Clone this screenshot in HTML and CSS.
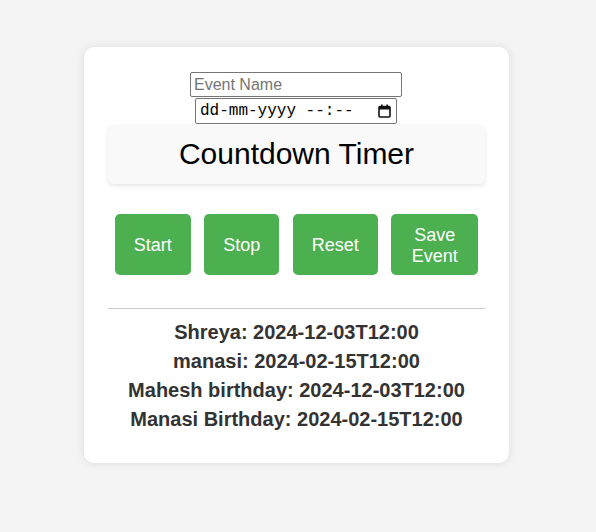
FILE: index.html
```html
<!DOCTYPE html>
<html>
<head>
<meta charset="utf-8">
<link rel="stylesheet" href="styles.css">
</head>
<body>
<div class="card">
  <div class="fields">
    <input class="name-input" type="text" placeholder="Event Name">
    <label class="date-input">
      <span class="date-text">dd-mm-yyyy --:--</span>
      <svg class="cal-icon" width="13" height="14" viewBox="0 0 13 14">
        <rect x="1" y="2.5" width="11" height="10.5" rx="1" fill="none" stroke="#111" stroke-width="1.6"/>
        <rect x="1" y="2.5" width="11" height="3" fill="#111"/>
        <rect x="3" y="0.5" width="1.6" height="3" fill="#111"/>
        <rect x="8.4" y="0.5" width="1.6" height="3" fill="#111"/>
      </svg>
    </label>
  </div>
  <div class="timer">Countdown Timer</div>
  <div class="buttons">
    <button class="btn">Start</button>
    <button class="btn">Stop</button>
    <button class="btn">Reset</button>
    <button class="btn">Save Event</button>
  </div>
  <hr class="divider">
  <ul class="events">
    <li>Shreya: 2024-12-03T12:00</li>
    <li>manasi: 2024-02-15T12:00</li>
    <li>Mahesh birthday: 2024-12-03T12:00</li>
    <li>Manasi Birthday: 2024-02-15T12:00</li>
  </ul>
</div>
</body>
</html>
```
FILE: styles.css
```css
html, body {
  margin: 0;
  padding: 0;
}
body {
  background: #f4f4f4;
  font-family: "Liberation Sans", Arial, sans-serif;
  padding-top: 47px;
  height: 532px;
  box-sizing: border-box;
}
.card {
  width: 377px;
  margin-left: 84px;
  background: #fff;
  border-radius: 10px;
  box-shadow: 0 0 10px rgba(0, 0, 0, 0.1);
  padding: 25px 24px 29px;
}
.fields {
  display: flex;
  flex-direction: column;
  align-items: center;
  gap: 1px;
}
.name-input {
  font-family: "Liberation Sans", Arial, sans-serif;
  font-size: 16px;
  width: 212px;
  height: 25px;
  box-sizing: border-box;
  border: 1px solid #767676;
  border-radius: 2px;
  padding: 1px 3px;
  color: #000;
  margin: 0 1px 0 0;
}
.name-input::placeholder {
  color: #757575;
}
.date-input {
  display: flex;
  align-items: center;
  justify-content: space-between;
  width: 202px;
  height: 26px;
  box-sizing: border-box;
  border: 1px solid #767676;
  border-radius: 2px;
  padding: 0 5px 0 4px;
  background: #fff;
  margin-right: 1px;
}
.date-text {
  font-family: "Liberation Mono", "Courier New", monospace;
  font-size: 16px;
  color: #000;
  white-space: pre;
  line-height: 18px;
}
.cal-icon {
  display: block;
}
.timer {
  margin-top: 1px;
  background: #f9f9f9;
  border-radius: 6px;
  box-shadow: 0 2px 4px rgba(0, 0, 0, 0.1);
  padding: 11px 0 13px;
  text-align: center;
  font-size: 30px;
  line-height: 35px;
  color: #000;
}
.buttons {
  margin-top: 30px;
  display: flex;
  justify-content: center;
}
.btn {
  margin: 0 6.75px;
  background: #4caf50;
  color: #fff;
  border: none;
  border-radius: 5px;
  padding: 11px 19px 9px;
  font-family: "Liberation Sans", Arial, sans-serif;
  font-size: 18px;
  line-height: 20.5px;
  flex-shrink: 1;
}
.divider {
  margin: 33px 0 0;
  border: none;
  border-top: 1px solid #ccc;
  height: 0;
}
.events {
  list-style: none;
  margin: 9px 0 0;
  padding: 0;
  text-align: center;
}
.events li {
  font-size: 20px;
  font-weight: bold;
  color: #333;
  line-height: 29px;
}
```
